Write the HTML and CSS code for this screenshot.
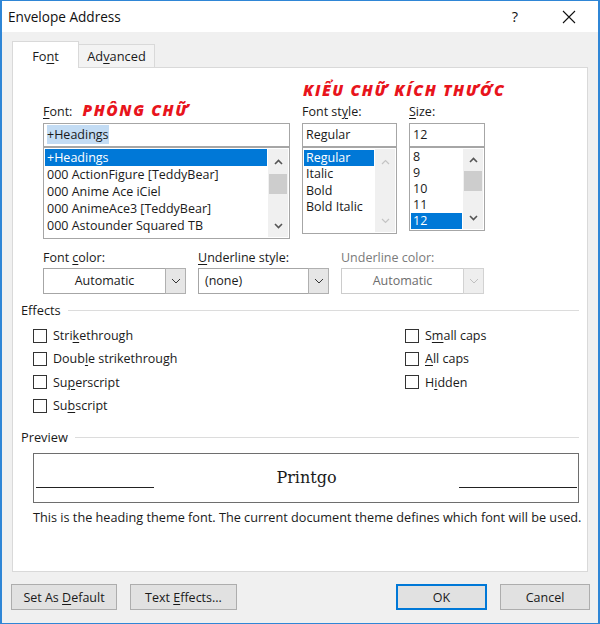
FILE: index.html
```html
<!DOCTYPE html>
<html lang="vi">
<head>
<meta charset="utf-8">
<title>Envelope Address</title>
<link rel="stylesheet" href="styles.css">
</head>
<body>
<div class="window">
  <div class="titlebar">
    <span class="title">Envelope Address</span>
    <span class="help">?</span>
    <span class="close"><svg width="14" height="14" viewBox="0 0 14 14"><path d="M1 1 L13 13 M13 1 L1 13" stroke="#111" stroke-width="1.1" fill="none"/></svg></span>
  </div>
  <div class="client">
    <div class="tabs">
      <div class="tab tab-active"><span>Fo<u>n</u>t</span></div>
      <div class="tab tab-idle"><span>Ad<u>v</u>anced</span></div>
    </div>
    <div class="panel">
      <div class="fontgrid">
        <div class="red red-main">KIỂU CHỮ KÍCH THƯỚC</div>
        <div class="lbl lbl-font"><span><u>F</u>ont:</span><span class="red red-font">PHÔNG CHỮ</span></div>
        <div class="lbl lbl-style">Font st<u>y</u>le:</div>
        <div class="lbl lbl-size"><u>S</u>ize:</div>
        <div class="input c1"><span class="hl-text">+Headings</span></div>
        <div class="input c2">Regular</div>
        <div class="input c3">12</div>
        <div class="list list-font">
          <div class="items">
            <div class="item sel">+Headings</div>
            <div class="item">000 ActionFigure [TeddyBear]</div>
            <div class="item">000 Anime Ace iCiel</div>
            <div class="item">000 AnimeAce3 [TeddyBear]</div>
            <div class="item">000 Astounder Squared TB</div>
          </div>
          <div class="sbar">
            <div class="sb-up"><svg width="9" height="6" viewBox="0 0 9 6"><polyline points="1,5 4.5,1.5 8,5" fill="none" stroke="#555" stroke-width="1.6"/></svg></div>
            <div class="sb-thumb"></div>
            <div class="sb-fill"></div>
            <div class="sb-down"><svg width="9" height="6" viewBox="0 0 9 6"><polyline points="1,1 4.5,4.5 8,1" fill="none" stroke="#555" stroke-width="1.6"/></svg></div>
          </div>
        </div>
        <div class="list list-style">
          <div class="items items-sm">
            <div class="item sel">Regular</div>
            <div class="item">Italic</div>
            <div class="item">Bold</div>
            <div class="item">Bold Italic</div>
          </div>
          <div class="sbar">
            <div class="sb-up"><svg width="9" height="6" viewBox="0 0 9 6"><polyline points="1,5 4.5,1.5 8,5" fill="none" stroke="#c4c4c4" stroke-width="1.2"/></svg></div>
            <div class="sb-fill"></div>
            <div class="sb-down"><svg width="9" height="6" viewBox="0 0 9 6"><polyline points="1,1 4.5,4.5 8,1" fill="none" stroke="#c4c4c4" stroke-width="1.2"/></svg></div>
          </div>
        </div>
        <div class="list list-size">
          <div class="items items-size">
            <div class="item">8</div>
            <div class="item">9</div>
            <div class="item">10</div>
            <div class="item">11</div>
            <div class="item sel">12</div>
          </div>
          <div class="sbar">
            <div class="sb-up sb-up-sm"><svg width="9" height="6" viewBox="0 0 9 6"><polyline points="1,5 4.5,1.5 8,5" fill="none" stroke="#555" stroke-width="1.6"/></svg></div>
            <div class="sb-thumb"></div>
            <div class="sb-fill"></div>
            <div class="sb-down"><svg width="9" height="6" viewBox="0 0 9 6"><polyline points="1,1 4.5,4.5 8,1" fill="none" stroke="#555" stroke-width="1.6"/></svg></div>
          </div>
        </div>
      </div>

      <div class="combos">
        <div class="combo-col combo-w1">
          <div class="lbl">Font <u>c</u>olor:</div>
          <div class="combo">
            <span class="combo-text center">Automatic</span>
            <span class="combo-btn"><svg width="10" height="6" viewBox="0 0 10 6"><polyline points="1,1 5,5 9,1" fill="none" stroke="#333" stroke-width="1"/></svg></span>
          </div>
        </div>
        <div class="combo-col combo-w2">
          <div class="lbl"><u>U</u>nderline style:</div>
          <div class="combo">
            <span class="combo-text">(none)</span>
            <span class="combo-btn"><svg width="10" height="6" viewBox="0 0 10 6"><polyline points="1,1 5,5 9,1" fill="none" stroke="#333" stroke-width="1"/></svg></span>
          </div>
        </div>
        <div class="combo-col combo-w1">
          <div class="lbl lbl-dis">Underline color:</div>
          <div class="combo combo-dis">
            <span class="combo-text center">Automatic</span>
            <span class="combo-btn"><svg width="10" height="6" viewBox="0 0 10 6"><polyline points="1,1 5,5 9,1" fill="none" stroke="#c0c0c0" stroke-width="1"/></svg></span>
          </div>
        </div>
      </div>

      <div class="group-head group-effects"><span>Effects</span><span class="rule"></span></div>
      <div class="effects">
        <div class="eff-col">
          <div class="check"><span class="box"></span><span>Stri<u>k</u>ethrough</span></div>
          <div class="check"><span class="box"></span><span>Doub<u>l</u>e strikethrough</span></div>
          <div class="check"><span class="box"></span><span>Su<u>p</u>erscript</span></div>
          <div class="check"><span class="box"></span><span>Su<u>b</u>script</span></div>
        </div>
        <div class="eff-col">
          <div class="check"><span class="box"></span><span>S<u>m</u>all caps</span></div>
          <div class="check"><span class="box"></span><span><u>A</u>ll caps</span></div>
          <div class="check"><span class="box"></span><span>H<u>i</u>dden</span></div>
        </div>
      </div>

      <div class="group-head group-preview"><span>Preview</span><span class="rule"></span></div>
      <div class="preview">
        <span class="pv-line pv-left"></span>
        <span class="pv-text">Printgo</span>
        <span class="pv-line pv-right"></span>
      </div>
      <div class="pv-desc">This is the heading theme font. The current document theme defines which font will be used.</div>
    </div>

    <div class="buttons">
      <div class="btn btn-default"><span>Set As <u>D</u>efault</span></div>
      <div class="btn btn-effects"><span>Text <u>E</u>ffects...</span></div>
      <div class="btn-spacer"></div>
      <div class="btn btn-ok"><span>OK</span></div>
      <div class="btn btn-cancel"><span>Cancel</span></div>
    </div>
  </div>
</div>
</body>
</html>
```

FILE: styles.css
```css
* { box-sizing: border-box; }
html, body { margin: 0; padding: 0; background: #ffffff; }
body {
  font-family: "Open Sans", "Noto Sans", "DejaVu Sans", sans-serif;
  font-size: 12.5px;
  color: #1a1a1a;
}
u { text-decoration: underline; text-underline-offset: 2px; text-decoration-thickness: 1px; }

.window {
  width: 600px;
  height: 624px;
  border: 1px solid #2f86d6;
  border-left-width: 2px;
  border-right-width: 2px;
  background: #f0f0f0;
  display: flex;
  flex-direction: column;
}

.titlebar {
  height: 31px;
  background: #ffffff;
  display: flex;
  align-items: center;
  padding-left: 6px;
  flex-shrink: 0;
}
.title { font-size: 13.6px; color: #111; flex: 1; }
.help { font-size: 14.5px; width: 14px; margin-right: 40px; text-align: center; color: #111; }
.close { width: 14px; height: 14px; margin-right: 22px; display: flex; }

.client { flex: 1; display: flex; flex-direction: column; }

.tabs {
  display: flex;
  align-items: flex-end;
  height: 35px;
  padding-left: 10px;
}
.tab {
  border: 1px solid #d9d9d9;
  border-bottom: none;
  display: flex;
  align-items: center;
  justify-content: center;
  font-size: 12.8px;
}
.tab-active {
  width: 67px;
  height: 27px;
  background: #ffffff;
  margin-bottom: -1px;
  position: relative;
  z-index: 1;
  padding-top: 2px;
}
.tab-idle {
  width: 76px;
  height: 23px;
  background: #f3f3f3;
  border-left: none;
}

.panel {
  margin: 0 10px;
  height: 505px;
  background: #ffffff;
  border: 1px solid #d9d9d9;
  padding: 12px 8px 0 8px;
  display: flex;
  flex-direction: column;
}

.fontgrid {
  margin-left: 22px;
  display: grid;
  grid-template-columns: 247px 95px 76px;
  grid-template-rows: 21px 22px 24px auto;
  column-gap: 12px;
}
.red {
  color: #e8141c;
  font-weight: 800;
  font-style: italic;
  letter-spacing: 1.6px;
  font-size: 15.5px;
}
.red-main { grid-column: 2 / 4; grid-row: 1; line-height: 21px; padding-left: 1px; white-space: nowrap; }
.lbl { line-height: 22px; white-space: nowrap; }
.lbl-font { grid-column: 1; grid-row: 2; display: flex; align-items: baseline; gap: 10px; }
.red-font { line-height: 16px; }
.lbl-style { grid-column: 2; grid-row: 2; }
.lbl-size { grid-column: 3; grid-row: 2; }

.input {
  grid-row: 3;
  height: 24px;
  border: 1px solid #a6a6a6;
  background: #fff;
  padding-left: 3px;
  line-height: 22px;
  white-space: nowrap;
  overflow: hidden;
}
.c1 { grid-column: 1; }
.c2 { grid-column: 2; }
.c3 { grid-column: 3; }
.hl-text { background: #c3dcf4; padding: 1px 0; }

.list {
  grid-row: 4;
  align-self: start;
  border: 1px solid #a6a6a6;
  background: #fff;
  display: flex;
  padding: 1px;
}
.list-font { grid-column: 1; height: 92px; }
.list-style { grid-column: 2; height: 87px; }
.list-size { grid-column: 3; height: 84px; }

.items { flex: 1; overflow: hidden; }
.item { height: 17px; line-height: 17px; padding-left: 2px; white-space: nowrap; }
.items-sm .item { height: 16.3px; line-height: 16px; }
.items-size .item { height: 16px; line-height: 16px; }
.item.sel { background: #0078d7; color: #ffffff; }
.list-style .item.sel { margin-top: 1px; }

.sbar {
  width: 20px;
  margin-left: 1px;
  background: #f0f0f0;
  display: flex;
  flex-direction: column;
}
.sb-up { height: 25px; display: flex; align-items: center; justify-content: center; }
.sb-up-sm { height: 22px; }
.sb-thumb { height: 20px; background: #cdcdcd; margin: 0 1px; }
.sb-fill { flex: 1; }
.sb-down { height: 22px; display: flex; align-items: center; justify-content: center; }

.combos {
  margin-left: 22px;
  margin-top: 8px;
  display: flex;
  gap: 12px;
}
.combo-w1 { width: 143px; }
.combo-w2 { width: 131px; }
.lbl-dis { color: #7a7a7a; }
.combo {
  margin-top: -1px;
  height: 26px;
  border: 1px solid #a6a6a6;
  background: #fff;
  display: flex;
}
.combo-text { flex: 1; line-height: 24px; padding-left: 6px; white-space: nowrap; }
.combo-text.center { text-align: center; padding-left: 0; }
.combo-btn {
  width: 21px;
  background: #e6e6e6;
  border: 1px solid #b0b0b0;
  margin: -1px -1px -1px 0;
  display: flex;
  align-items: center;
  justify-content: center;
}
.combo-dis { border-color: #cccccc; }
.combo-dis .combo-text { color: #6d6d6d; }
.combo-dis .combo-btn { background: #eeeeee; border-color: #d2d2d2; }

.group-head {
  display: flex;
  align-items: center;
  gap: 7px;
  line-height: 18px;
  font-size: 12.8px;
}
.group-effects { margin-top: 7px; }
.rule { flex: 1; height: 1px; background: #dcdcdc; }

.effects {
  margin-top: 5px;
  margin-left: 12px;
  display: flex;
}
.eff-col:first-child { width: 372px; }
.check { height: 23.3px; display: flex; align-items: center; gap: 6px; }
.box { width: 14px; height: 14px; border: 1px solid #333; background: #fff; }

.group-preview { margin-top: 11px; }

.preview {
  margin: 7px 0 0 12px;
  height: 50px;
  border: 1px solid #6e6e6e;
  display: flex;
  align-items: flex-start;
  padding: 0 1px;
}
.pv-line { height: 1px; background: #222; margin-top: 33px; }
.pv-left { width: 118px; margin-left: 1px; }
.pv-right { width: 118px; }
.pv-text {
  flex: 1;
  text-align: center;
  font-family: "DejaVu Serif", "Liberation Serif", serif;
  font-size: 16px;
  line-height: 20px;
  margin-top: 14px;
  color: #1a1a1a;
}
.pv-desc { margin: 5px 0 0 12px; line-height: 18px; white-space: nowrap; font-size: 12.7px; }

.buttons {
  margin-top: 12px;
  padding: 0 8px 0 9px;
  display: flex;
}
.btn {
  height: 26px;
  background: #e1e1e1;
  border: 1px solid #adadad;
  display: flex;
  align-items: center;
  justify-content: center;
  white-space: nowrap;
}
.btn-default { width: 106px; }
.btn-effects { width: 107px; margin-left: 13px; }
.btn-spacer { flex: 1; }
.btn-ok { width: 91px; border: 2px solid #0078d7; }
.btn-cancel { width: 90px; margin-left: 13px; }
```
